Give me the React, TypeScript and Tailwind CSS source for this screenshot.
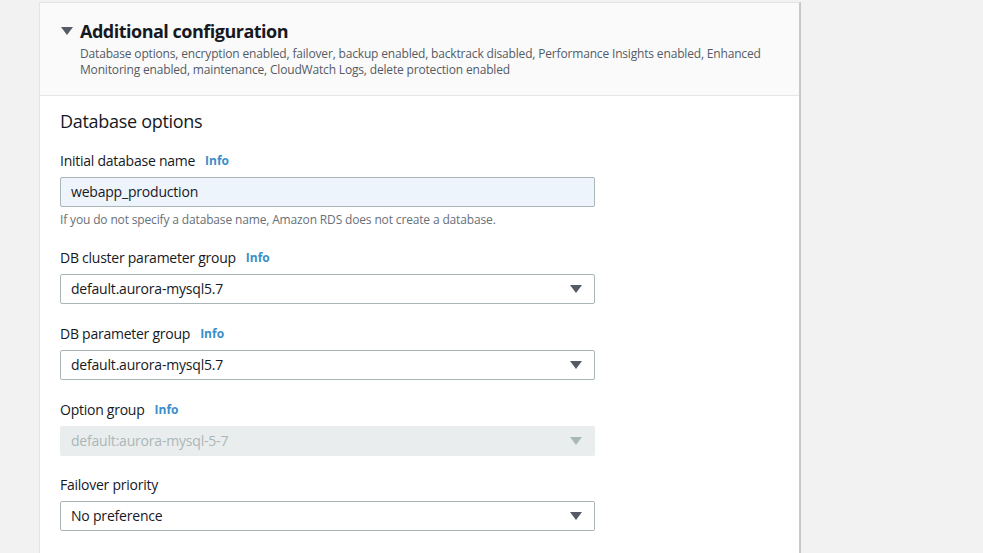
import React from 'react'

const font = { fontFamily: '"Open Sans", "Noto Sans", sans-serif' }

function Caret({ muted }: { muted?: boolean }) {
  return (
    <svg width="12" height="8" viewBox="0 0 12 8" className="shrink-0">
      <path d="M0 0 L12 0 L6 8 Z" fill={muted ? '#aab7b8' : '#545b64'} />
    </svg>
  )
}

function Label({ text, info }: { text: string; info?: boolean }) {
  return (
    <div className="flex items-center h-5 mb-1.5 text-sm tracking-[-0.25px] text-[#16191f]">
      <span>{text}</span>
      {info && <span className="ml-2.5 text-xs font-bold tracking-normal text-[#3a8ec8]">Info</span>}
    </div>
  )
}

function Select({ value, disabled }: { value: string; disabled?: boolean }) {
  return (
    <div
      className={
        disabled
          ? 'flex items-center justify-between h-[30px] w-[535px] rounded-[2px] bg-[#eaeded] pl-[11px] pr-[13px] text-sm tracking-[-0.2px] text-[#aab7b8]'
          : 'flex items-center justify-between h-[30px] w-[535px] rounded-[2px] border border-[#aab7b8] bg-white pl-[10px] pr-[12px] text-sm tracking-[-0.2px] text-[#16191f]'
      }
    >
      <span>{value}</span>
      <Caret muted={disabled} />
    </div>
  )
}

export default function App() {
  return (
    <div className="min-h-screen w-[983px] h-[553px] overflow-hidden bg-[#f2f2f2] pl-[39px] pt-[2px]" style={font}>
      <div className="w-[762px] h-[600px] bg-white border-l border-t border-[#e4e4e4] border-r-2 border-r-[#c8c8c8]">
        <div className="bg-[#fafafa] border-b border-[#e6e6e6] pl-[21px] pt-[15px] h-[93px]">
          <div className="flex items-center gap-[7px] h-[26px]">
            <Caret />
            <span className="text-lg font-bold tracking-[-0.5px] text-[#16191f]">Additional configuration</span>
          </div>
          <p className="ml-[19px] mt-[2px] text-xs leading-4 tracking-[-0.17px] text-[#545b64] w-[690px]">
            Database options, encryption enabled, failover, backup enabled, backtrack disabled, Performance Insights enabled, Enhanced Monitoring enabled, maintenance, CloudWatch Logs, delete protection enabled
          </p>
        </div>
        <div className="pl-[20px] pt-[14px]">
          <h2 className="text-lg leading-[22px] tracking-[-0.3px] text-[#16191f] mb-[19px]">Database options</h2>

          <Label text="Initial database name" info />
          <div className="flex items-center h-[30px] w-[535px] rounded-[2px] border border-[#aab7b8] bg-[#eef4fc] pl-[10px] text-sm tracking-[-0.2px] text-[#16191f]">
            webapp_production
          </div>
          <p className="mt-[5px] text-xs leading-4 tracking-[-0.15px] text-[#687078]">
            If you do not specify a database name, Amazon RDS does not create a database.
          </p>

          <div className="mt-5">
            <Label text="DB cluster parameter group" info />
            <Select value="default.aurora-mysql5.7" />
          </div>

          <div className="mt-5">
            <Label text="DB parameter group" info />
            <Select value="default.aurora-mysql5.7" />
          </div>

          <div className="mt-5">
            <Label text="Option group" info />
            <Select value="default:aurora-mysql-5-7" disabled />
          </div>

          <div className="mt-[19px]">
            <Label text="Failover priority" />
            <Select value="No preference" />
          </div>
        </div>
      </div>
    </div>
  )
}
